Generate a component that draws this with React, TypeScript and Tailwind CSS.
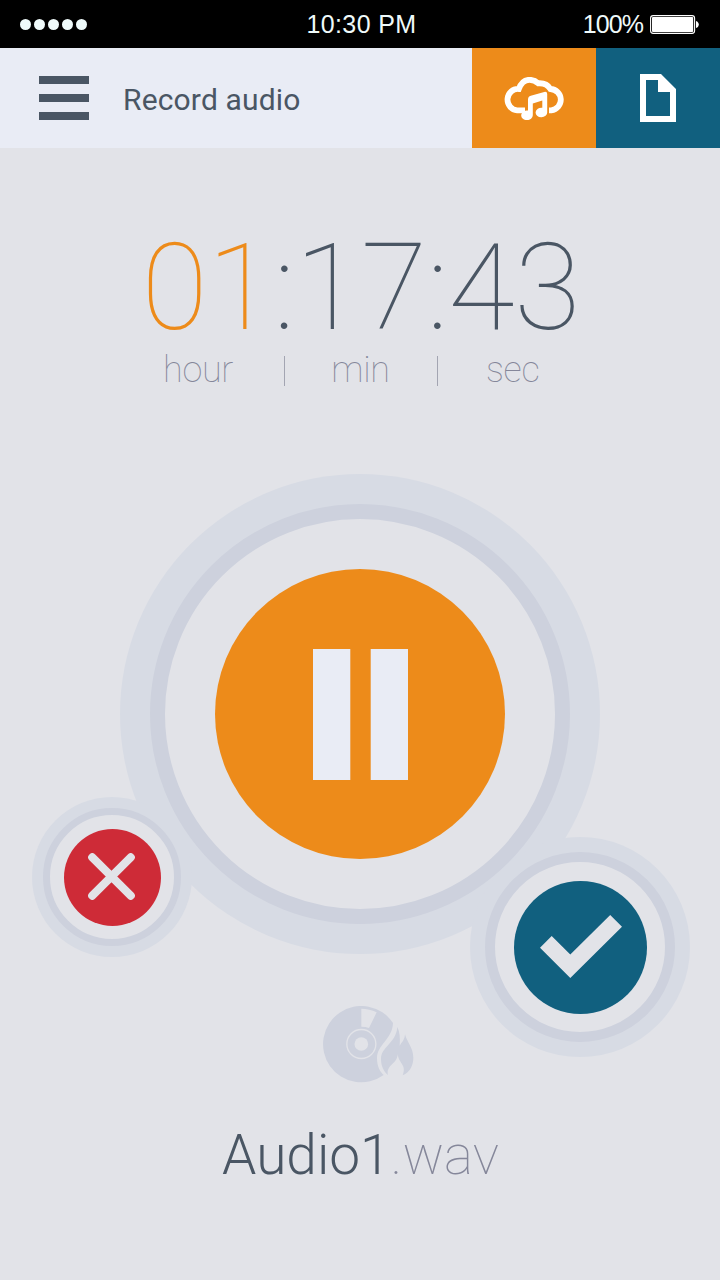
import type { ReactNode } from "react";

function StatusBar() {
  return (
    <div className="grid h-12 shrink-0 grid-cols-3 items-center bg-black font-['Liberation_Sans',sans-serif] text-[25px] leading-[48px] text-[#effafa]">
      <div className="flex gap-[3px] pl-5">
        {[0, 1, 2, 3, 4].map((dot) => (
          <span key={dot} className="size-[11px] rounded-full bg-[#effafa]" />
        ))}
      </div>
      <div className="whitespace-nowrap pl-[3px] text-center tracking-[0.4px]">10:30 PM</div>
      <div className="flex items-center justify-end gap-[7px] pr-[21px]">
        <span className="text-[25px] tracking-[-0.9px]">100%</span>
        <svg className="h-[19px] w-[49px]" viewBox="0 0 49 19">
          <rect x=".6" y=".6" width="44" height="17.8" rx="2.6" fill="none" stroke="#fff" strokeWidth="1.1" />
          <rect x="2" y="2" width="41.2" height="15" rx="1" fill="#fff" />
          <path d="M46 6C49.7 7 49.7 12 46 13z" fill="#fff" />
        </svg>
      </div>
    </div>
  );
}

function CloudMusicIcon() {
  return (
    <svg className="h-[43px] w-[60px]" viewBox="0 0 60 43" fill="none">
      <path
        d="M21 33.3H13.2A10.4 10.6 0 0 1 14.8 12C17 6 20.5 2.8 25.5 2.8C29 2.8 32 4.2 34.3 6.3C40 5.9 44 8 46.4 12A10.9 10.7 0 0 1 47.3 33.3H45"
        stroke="#fff"
        strokeWidth="5.8"
      />
      <path d="M24 33L18.5 36L17 38L30 43V20z" fill="#ed8b1a" />
      <path
        d="M24 34V22.5Q24 19.6 26.8 18.8L40.2 14.9Q43.2 14.2 43.2 17V35.2A5.8 4.8 0 1 1 38.3 30.7V23.6L28.8 26.6V38.2A5.8 4.8 0 1 1 24 33.6z"
        fill="#fff"
      />
    </svg>
  );
}

function Header() {
  return (
    <header className="flex h-[100px] shrink-0 bg-[#e9ecf5]">
      <button className="ml-[39px] flex w-[50px] flex-col justify-center gap-[10px]" aria-label="Menu">
        <span className="h-2 w-full bg-[#4a5664]" />
        <span className="h-2 w-full bg-[#4a5664]" />
        <span className="h-2 w-full bg-[#4a5664]" />
      </button>
      <h1 className="ml-[34px] flex-1 text-[30px] leading-[103px] tracking-[0.16px]">Record audio</h1>
      <button className="flex w-[124px] items-center justify-center bg-[#ed8b1a]" aria-label="Cloud music">
        <CloudMusicIcon />
      </button>
      <button className="flex w-[124px] items-center justify-center bg-[#11607f]" aria-label="Files">
        <svg className="h-12 w-9" viewBox="0 0 36 48">
          <path d="M0 0H21L36 15V48H0zM6 6V42H30V18H18V6z" fill="#fff" fillRule="evenodd" />
        </svg>
      </button>
    </header>
  );
}

function Timer() {
  return (
    <section className="mt-[75px] flex flex-col items-center">
      <div className="whitespace-nowrap pl-[2px] text-[121px] font-thin leading-[130px] tracking-[-0.2px]">
        <span className="text-[#ed8b1a]">01</span>:17:43
      </div>
      <div className="-mt-[3px] flex h-10 w-[398px] items-center text-[36px] font-thin leading-10 tracking-[-0.3px] text-[#85879a]">
        <span className="w-[123px] pl-[2px]">hour</span>
        <span className="mt-px h-[30px] w-px bg-[#a3a5b2]" />
        <span className="w-[152px] pr-px text-center">min</span>
        <span className="mt-px h-[30px] w-px bg-[#a3a5b2]" />
        <span className="pl-12">sec</span>
      </div>
    </section>
  );
}

function RoundButton({ ring, face, label, children }: { ring: string; face: string; label: string; children: ReactNode }) {
  return (
    <div className={`flex items-center justify-center rounded-full border-[#cdd1dd] bg-[#e2e3e8] ${ring}`}>
      <button className={`flex items-center justify-center rounded-full ${face}`} aria-label={label}>
        {children}
      </button>
    </div>
  );
}

function Controls() {
  return (
    <section className="relative mx-auto mt-[84px] size-[480px] shrink-0">
      <div className="flex size-[480px] items-center justify-center rounded-full bg-[#d7dbe4]">
        <RoundButton ring="size-[420px] border-[15px]" face="size-[290px] bg-[#ed8b1a]" label="Pause">
          <svg className="ml-px h-[131px] w-[95px]" viewBox="0 0 95 131">
            <path d="M0 0H37.3V131H0zM57.7 0H95V131H57.7z" fill="#e9ecf5" />
          </svg>
        </RoundButton>
      </div>
      <div className="absolute -left-[88px] top-[323px] flex size-40 items-center justify-center rounded-full bg-[#d7dbe4]">
        <RoundButton ring="size-[138px] border-[7px]" face="size-[97px] bg-[#ce2b37]" label="Discard">
          <svg className="mb-px mr-[2px] size-[47px]" viewBox="0 0 47 47">
            <path d="M4.3 4.3L42.7 42.7M42.7 4.3L4.3 42.7" stroke="#e2e3e8" strokeWidth="8.2" strokeLinecap="round" />
          </svg>
        </RoundButton>
      </div>
      <div className="absolute left-[350px] top-[363px] flex size-[220px] items-center justify-center rounded-full bg-[#d7dbe4]">
        <RoundButton ring="size-[190px] border-[10px]" face="size-[133px] bg-[#11607f]" label="Save">
          <svg className="mb-[2px] ml-px h-[63px] w-[82px]" viewBox="0 0 82 63">
            <path d="M0 32.7L11.7 21L30.3 39.6L70.2 0L82 11.7L30.3 63z" fill="#e2e3e8" />
          </svg>
        </RoundButton>
      </div>
    </section>
  );
}

function BurnDiscIcon() {
  return (
    <svg className="h-[77px] w-[91px]" viewBox="38 33 273 231">
      <path d="M248 84C246 134 200 148 200 190C200 215 210 232 220 240A114.5 114.5 0 1 1 248 84z" fill="#cdd1dd" />
      <path d="M153 41Q177 41 199 52L176 99Q166 95 153 95z" fill="#e2e3e8" />
      <circle cx="153" cy="147" r="43.5" fill="none" stroke="#e2e3e8" strokeWidth="4" />
      <circle cx="153" cy="147" r="20.5" fill="#e2e3e8" />
      <path
        d="M261 96C257 145 212 155 212 192C212 215 221 230 233 240C226 210 261 208 262 178C266 207 290 210 277 241C300 230 309 210 309 188C309 158 290 142 284 118C283 134 276 140 268 152C270 130 268 110 261 96z"
        fill="#cdd1dd"
      />
    </svg>
  );
}

export default function App() {
  return (
    <main className="flex h-[1280px] w-[720px] flex-col overflow-hidden bg-[#e2e3e8] font-['Roboto',sans-serif] text-[#4a5664]">
      <StatusBar />
      <Header />
      <Timer />
      <Controls />
      <section className="mt-[52px] flex flex-col items-center">
        <div className="pl-4">
          <BurnDiscIcon />
        </div>
        <p className="mt-[39px] whitespace-nowrap pl-px text-[55px] font-light leading-[66px]">
          Audio1<span className="font-thin text-[#85879a]">.wav</span>
        </p>
      </section>
    </main>
  );
}
